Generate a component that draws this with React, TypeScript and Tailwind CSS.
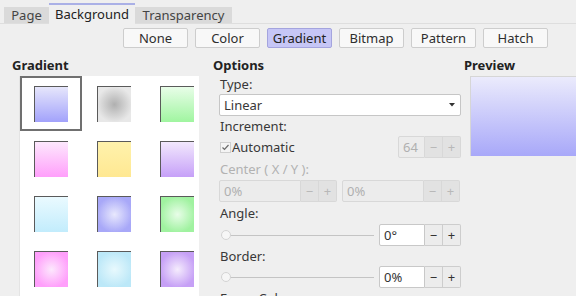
import React from "react";

const swatches: string[] = [
  "bg-[linear-gradient(to_bottom,#e6e6fb,#a2a2fb)]",
  "bg-[radial-gradient(circle,#b0b0b0_0%,#e8e8e8_75%)]",
  "bg-[linear-gradient(to_bottom,#e8fde8,#a0f5a0)]",
  "bg-[linear-gradient(to_bottom,#fde8fd,#ff9ffb)]",
  "bg-[linear-gradient(to_bottom,#fff2ac,#ffe892)]",
  "bg-[linear-gradient(to_bottom,#f2e8fd,#c6a0f8)]",
  "bg-[linear-gradient(to_bottom,#eafaff,#c2ecfc)]",
  "bg-[radial-gradient(circle,#e8e8fd_0%,#a8a8f8_75%)]",
  "bg-[radial-gradient(circle,#e8fde8_0%,#a0f2a0_75%)]",
  "bg-[radial-gradient(circle,#fde8fd_0%,#ff9ffb_75%)]",
  "bg-[radial-gradient(circle,#e8f9fd_0%,#bce8f8_75%)]",
  "bg-[radial-gradient(circle,#f5ecfd_0%,#c6a0f6_75%)]",
];

function Spin({
  value,
  fieldW,
  disabled,
}: {
  value: string;
  fieldW: string;
  disabled?: boolean;
}) {
  const fieldCls = disabled
    ? "bg-[#ececec] text-[#b0b0b0] border-[#d8d8d8]"
    : "bg-white text-[#333] border-[#c8c8c8]";
  const btnCls = disabled
    ? "bg-[#e2e2e2] text-[#b8b8b8] border-[#d8d8d8]"
    : "bg-[#ececec] text-[#333] border-[#cdcdcd]";
  return (
    <div className="flex h-[22px]">
      <div
        className={`${fieldW} h-full border ${fieldCls} rounded-l-[2px] flex items-center pl-[4px]`}
      >
        {value}
      </div>
      <div
        className={`w-[18px] h-full border-y border-r ${btnCls} flex items-center justify-center`}
      >
        −
      </div>
      <div
        className={`w-[18px] h-full border-y border-r ${btnCls} rounded-r-[2px] flex items-center justify-center`}
      >
        +
      </div>
    </div>
  );
}

function Slider() {
  return (
    <div className="flex-1 relative h-full flex items-center pl-[2px] pr-[5px]">
      <div className="w-full h-[1px] bg-[#c4c4c4]" />
      <div className="absolute left-[2px] top-1/2 -translate-y-1/2 w-[10px] h-[10px] rounded-full bg-[#f6f6f6] border border-[#d4d4d4]" />
    </div>
  );
}

export default function App() {
  return (
    <div className="w-[576px] h-[296px] overflow-hidden bg-[#efefef] text-[13px] leading-none text-[#383838] font-['Noto_Sans','Open_Sans',sans-serif]">
      {/* Tabs */}
      <div className="h-[24px] flex items-end pl-[4px] border-b border-[#dedede]">
        <div className="h-[16px] w-[45px] bg-[#dadada] text-[#444] flex items-center justify-center">
          Page
        </div>
        <div className="h-[21px] w-[86px] border-t-2 border-[#aab0e6] bg-[#efefef] text-[#222] flex items-center justify-center mb-[-1px] pb-[1px]">
          Background
        </div>
        <div className="h-[16px] w-[97px] bg-[#dadada] text-[#444] flex items-center justify-center">
          Transparency
        </div>
      </div>

      {/* Fill type buttons */}
      <div className="flex gap-[7px] pl-[123px] mt-[4px]">
        {["None", "Color", "Gradient", "Bitmap", "Pattern", "Hatch"].map((b) => (
          <div
            key={b}
            className={`w-[65px] h-[20px] rounded-[2px] border flex items-center justify-center ${
              b === "Gradient"
                ? "bg-[#c6c6f6] border-[#a4a4de] text-[#222]"
                : "bg-[#f8f8f8] border-[#cdcdcd] text-[#2e2e2e]"
            }`}
          >
            {b}
          </div>
        ))}
      </div>

      {/* Main */}
      <div className="flex mt-[8px]">
        {/* Gradient list */}
        <div className="w-[213px] shrink-0">
          <div className="h-[18px] pl-[12px] flex items-center font-bold text-[#222]">
            Gradient
          </div>
          <div className="ml-[19px] mt-[2px] w-[180px] h-[230px] bg-white overflow-hidden border-l border-[#e4e4e4]">
            <div className="grid grid-cols-[repeat(3,63px)] auto-rows-[55px] w-[189px]">
              {swatches.map((s, i) => (
                <div
                  key={i}
                  className={`border-2 ${
                    i === 0 ? "border-[#707070]" : "border-transparent"
                  } w-[62px] pl-[12px] pt-[8px]`}
                >
                  <div
                    className={`w-[34px] h-[36px] border-t border-l border-[#5a5a5a] ${s}`}
                  />
                </div>
              ))}
            </div>
          </div>
        </div>

        {/* Options */}
        <div className="w-[248px] shrink-0">
          <div className="h-[18px] flex items-center font-bold text-[#222]">
            Options
          </div>
          <div className="pl-[6px] flex flex-col">
            <div className="h-[20px] flex items-center pl-[1px]">Type:</div>
            <div className="h-[22px] bg-white border border-[#c6c6c6] rounded-[2px] flex items-center justify-between pl-[4px] pr-[5px]">
              <span>Linear</span>
              <svg width="6" height="4" viewBox="0 0 6 4">
                <path d="M0 0 L6 0 L3 3.5 Z" fill="#333" />
              </svg>
            </div>
            <div className="h-[20px] flex items-center pl-[1px]">Increment:</div>
            <div className="h-[22px] flex items-center justify-between">
              <div className="flex items-center pl-[1px]">
                <svg width="11" height="11" viewBox="0 0 11 11" className="mr-[1px]">
                  <rect x="0.5" y="0.5" width="10" height="10" fill="#f4f4f4" stroke="#cfcfcf" />
                  <path d="M2.5 5.5 L4.5 7.5 L8.5 3" fill="none" stroke="#6a6a6a" strokeWidth="1.2" />
                </svg>
                <span>Automatic</span>
              </div>
              <Spin value="64" fieldW="w-[27px]" disabled />
            </div>
            <div className="h-[22px] flex items-center pl-[1px] text-[#b2b2b2]">
              Center ( X / Y ):
            </div>
            <div className="h-[22px] flex gap-[5px]">
              <Spin value="0%" fieldW="w-[82px]" disabled />
              <Spin value="0%" fieldW="w-[82px]" disabled />
            </div>
            <div className="h-[22px] flex items-center pl-[1px]">Angle:</div>
            <div className="h-[22px] flex items-center">
              <Slider />
              <Spin value="0°" fieldW="w-[46px]" />
            </div>
            <div className="h-[20px] flex items-center pl-[1px]">Border:</div>
            <div className="h-[22px] flex items-center">
              <Slider />
              <Spin value="0%" fieldW="w-[46px]" />
            </div>
            <div className="h-[20px] flex items-center pl-[1px]">Focus Color:</div>
          </div>
        </div>

        {/* Preview */}
        <div className="flex-1 pl-[3px] min-w-0">
          <div className="h-[18px] flex items-center font-bold text-[#222]">
            Preview
          </div>
          <div className="ml-[6px] mt-[2px] h-[80px] border-t border-l border-[#d6d6d6] bg-[linear-gradient(to_bottom,#ebebfc,#a8a8f9)]" />
        </div>
      </div>
    </div>
  );
}
